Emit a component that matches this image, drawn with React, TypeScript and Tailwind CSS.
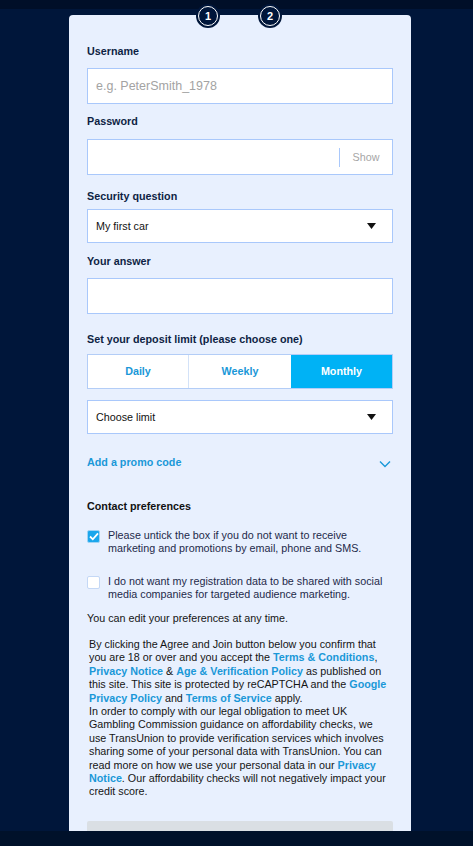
import React from "react";

const Label = ({ children, className = "" }: { children: React.ReactNode; className?: string }) => (
  <div className={`text-[10.75px] leading-[13px] font-bold text-[#0e1f44] ${className}`}>{children}</div>
);

const Caret = () => (
  <svg width="9" height="6" viewBox="0 0 9 6" className="shrink-0">
    <path d="M0 0 H9 L4.5 6 Z" fill="#111" />
  </svg>
);

const Link = ({ children }: { children: React.ReactNode }) => (
  <span className="font-bold text-[#1a98d8]">{children}</span>
);

export default function App() {
  return (
    <div className="min-h-[846px] bg-[#00163a] font-['Liberation_Sans',Arial,sans-serif]">
      <div className="h-[9px] bg-[#000f28]" />
      <div className="ml-[69px] mt-[6px] w-[342px] relative rounded-t-[4px] bg-[#e8f0fe] px-[18px] pt-[30px] pb-[40px]">
        {/* step circles */}
        <div className="absolute top-[-11px] left-[127px] w-[24px] h-[24px] rounded-full bg-[#00163a] flex items-center justify-center">
          <div className="w-[20px] h-[20px] rounded-full border-[1.5px] border-white flex items-center justify-center text-white text-[11px] font-bold leading-none">1</div>
        </div>
        <div className="absolute top-[-11px] left-[189px] w-[24px] h-[24px] rounded-full bg-[#00163a] flex items-center justify-center">
          <div className="w-[20px] h-[20px] rounded-full border-[1.5px] border-white flex items-center justify-center text-white text-[11px] font-bold leading-none">2</div>
        </div>

        <Label>Username</Label>
        <div className="mt-[10px] h-[36px] bg-white border border-[#a9c8fb] flex items-center px-[8px] text-[12.5px] text-[#a3a3a3]">
          e.g. PeterSmith_1978
        </div>

        <Label className="mt-[11px]">Password</Label>
        <div className="mt-[11px] h-[36px] bg-white border border-[#a9c8fb] flex items-center justify-end">
          <div className="h-[19px] w-px bg-[#a9c8fb]" />
          <div className="w-[52px] text-center text-[10.75px] text-[#a6a6a6]">Show</div>
        </div>

        <Label className="mt-[15px]">Security question</Label>
        <div className="mt-[6px] h-[34px] bg-white border border-[#a9c8fb] flex items-center justify-between pl-[8px] pr-[16px] text-[10.75px] text-[#111]">
          <span>My first car</span>
          <Caret />
        </div>

        <Label className="mt-[12px]">Your answer</Label>
        <div className="mt-[10px] h-[36px] bg-white border border-[#a9c8fb]" />

        <Label className="mt-[19px]">Set your deposit limit (please choose one)</Label>
        <div className="mt-[8px] h-[35px] flex border border-[#b3cdf7] bg-white text-[10.75px] font-bold">
          <div className="w-[101px] flex items-center justify-center text-[#1a98d8] border-r border-[#d3e2f8]">Daily</div>
          <div className="w-[102px] flex items-center justify-center text-[#1a98d8]">Weekly</div>
          <div className="flex-1 flex items-center justify-center bg-[#00b2f5] text-white">Monthly</div>
        </div>

        <div className="mt-[11px] h-[34px] bg-white border border-[#a9c8fb] flex items-center justify-between pl-[8px] pr-[16px] text-[10.75px] text-[#111]">
          <span>Choose limit</span>
          <Caret />
        </div>

        <div className="mt-[22px] flex items-center justify-between">
          <div className="text-[10.75px] leading-[13px] font-bold text-[#1a98d8]">Add a promo code</div>
          <svg width="12" height="8" viewBox="0 0 12 8" className="mr-[2px] mt-[2px]">
            <path d="M1 1.5 L6 6.5 L11 1.5" fill="none" stroke="#1a98d8" strokeWidth="1.4" />
          </svg>
        </div>

        <div className="mt-[31px] text-[10.75px] leading-[13px] font-bold text-[#111]">Contact preferences</div>

        <div className="mt-[16px] flex items-start">
          <div className="mt-[0.5px] w-[13px] h-[13px] shrink-0 rounded-[2px] bg-[#1aa6ec] border border-[#9fd3f5] flex items-center justify-center">
            <svg width="10" height="9" viewBox="0 0 10 9">
              <path d="M1 4.5 L3.8 7.3 L9 1.3" fill="none" stroke="white" strokeWidth="1.8" />
            </svg>
          </div>
          <div className="ml-[8px] text-[10.75px] leading-[13px] text-[#1e2a4a]">
            Please untick the box if you do not want to receive marketing and promotions by email, phone and SMS.
          </div>
        </div>

        <div className="mt-[20px] flex items-start">
          <div className="mt-[0.5px] w-[13px] h-[13px] shrink-0 rounded-[2px] bg-white border border-[#c4d8f6]" />
          <div className="ml-[8px] text-[10.75px] leading-[13px] text-[#1e2a4a]">
            I do not want my registration data to be shared with social media companies for targeted audience marketing.
          </div>
        </div>

        <div className="mt-[11px] text-[10.75px] leading-[13px] text-[#151515]">You can edit your preferences at any time.</div>

        <div className="mt-[13px] pl-[2px] pr-[5px] text-[10.75px] leading-[13.4px] text-[#151515]">
          By clicking the Agree and Join button below you confirm that you are 18 or over and you accept the{" "}
          <Link>Terms &amp; Conditions</Link>, <Link>Privacy Notice</Link> &amp; <Link>Age &amp; Verification Policy</Link> as
          published on this site. This site is protected by reCAPTCHA and the <Link>Google Privacy Policy</Link> and{" "}
          <Link>Terms of Service</Link> apply.
          <br />
          In order to comply with our legal obligation to meet UK Gambling Commission guidance on affordability checks, we use
          TransUnion to provide verification services which involves sharing some of your personal data with TransUnion. You can
          read more on how we use your personal data in our <Link>Privacy Notice</Link>. Our affordability checks will not
          negatively impact your credit score.
        </div>

        <div className="mt-[22px] h-[40px] rounded-[2px] bg-[#dadfe4]" />
      </div>
      <div className="fixed bottom-0 left-0 right-0 h-[15px] bg-[#00112a]" />
    </div>
  );
}
